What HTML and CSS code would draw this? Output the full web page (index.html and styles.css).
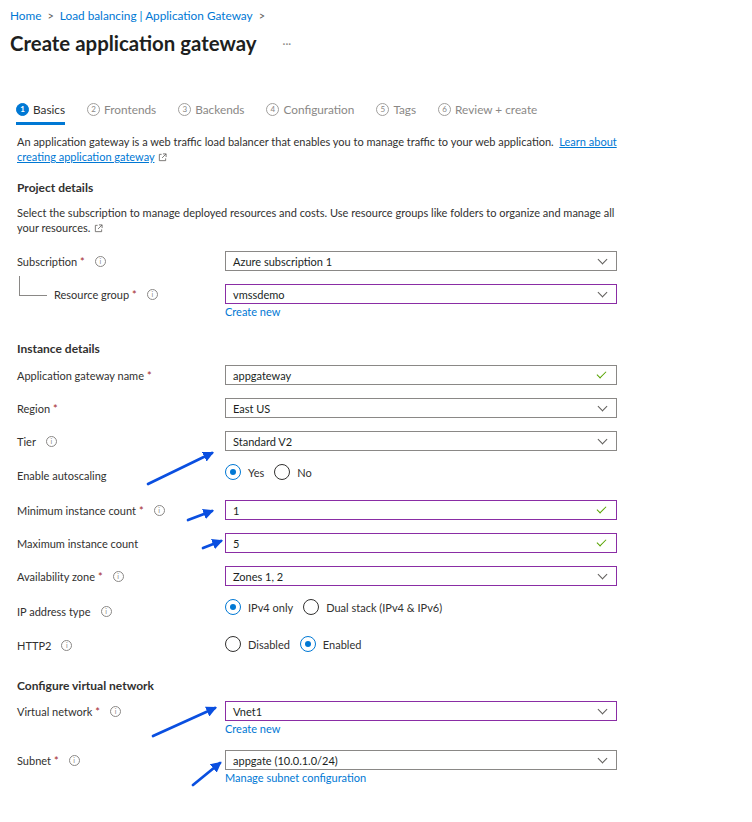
FILE: index.html
```html
<!DOCTYPE html>
<html>
<head>
<meta charset="utf-8">
<link rel="stylesheet" href="styles.css">
</head>
<body>
<div class="page">
  <nav class="crumbs">
    <a class="crumb">Home</a><span class="sep">&gt;</span><a class="crumb">Load balancing | Application Gateway</a><span class="sep">&gt;</span>
  </nav>
  <div class="titlebar">
    <h1 class="title">Create application gateway</h1>
    <span class="more">···</span>
  </div>

  <div class="content">
    <div class="tabs">
      <div class="tab active"><span class="num">1</span><span class="tabtext">Basics</span></div>
      <div class="tab"><span class="num">2</span><span class="tabtext">Frontends</span></div>
      <div class="tab"><span class="num">3</span><span class="tabtext">Backends</span></div>
      <div class="tab"><span class="num">4</span><span class="tabtext">Configuration</span></div>
      <div class="tab"><span class="num">5</span><span class="tabtext">Tags</span></div>
      <div class="tab"><span class="num">6</span><span class="tabtext">Review + create</span></div>
    </div>

    <p class="intro">An application gateway is a web traffic load balancer that enables you to manage traffic to your web application.&nbsp; <a class="link ul">Learn about</a><br><a class="link ul">creating application gateway</a> <svg class="ext" viewBox="0 0 10 10" width="9" height="9"><path d="M4 1.5H1.5v7h7V6" fill="none" stroke="#605e5c" stroke-width="0.9"/><path d="M5.5 1H9v3.5M9 1L4.5 5.5" fill="none" stroke="#605e5c" stroke-width="0.9"/></svg></p>

    <h2 class="section first">Project details</h2>
    <p class="desc">Select the subscription to manage deployed resources and costs. Use resource groups like folders to organize and manage all your resources. <svg class="ext" viewBox="0 0 10 10" width="9" height="9"><path d="M4 1.5H1.5v7h7V6" fill="none" stroke="#605e5c" stroke-width="0.9"/><path d="M5.5 1H9v3.5M9 1L4.5 5.5" fill="none" stroke="#605e5c" stroke-width="0.9"/></svg></p>

    <div class="row sub-row">
      <div class="label">Subscription <span class="req">*</span><span class="info">i</span></div>
      <div class="select"><span>Azure subscription 1</span><span class="chev"></span></div>
    </div>
    <div class="row rg-row">
      <div class="label indent"><span class="tree"></span>Resource group <span class="req">*</span><span class="info">i</span></div>
      <div class="select purple"><span>vmssdemo</span><span class="chev"></span></div>
    </div>
    <div class="under"><a class="link">Create new</a></div>

    <h2 class="section inst">Instance details</h2>
    <div class="row">
      <div class="label">Application gateway name <span class="req">*</span></div>
      <div class="select"><span>appgateway</span><span class="check"></span></div>
    </div>
    <div class="row">
      <div class="label">Region <span class="req">*</span></div>
      <div class="select"><span>East US</span><span class="chev"></span></div>
    </div>
    <div class="row">
      <div class="label">Tier<span class="info">i</span></div>
      <div class="select"><span>Standard V2</span><span class="chev"></span></div>
    </div>
    <div class="row radio-row autoscale">
      <div class="label low">Enable autoscaling</div>
      <div class="radios up">
        <span class="radio on"></span><span class="rlabel">Yes</span>
        <span class="radio"></span><span class="rlabel">No</span>
      </div>
    </div>
    <div class="row">
      <div class="label">Minimum instance count <span class="req">*</span><span class="info">i</span></div>
      <div class="select purple"><span>1</span><span class="check"></span></div>
    </div>
    <div class="row">
      <div class="label">Maximum instance count</div>
      <div class="select purple"><span>5</span><span class="check"></span></div>
    </div>
    <div class="row plus1">
      <div class="label">Availability zone <span class="req">*</span><span class="info">i</span></div>
      <div class="select purple"><span>Zones 1, 2</span><span class="chev"></span></div>
    </div>
    <div class="row radio-row plus1">
      <div class="label low">IP address type<span class="info">i</span></div>
      <div class="radios up2">
        <span class="radio on"></span><span class="rlabel">IPv4 only</span>
        <span class="radio"></span><span class="rlabel">Dual stack (IPv4 &amp; IPv6)</span>
      </div>
    </div>
    <div class="row radio-row">
      <div class="label low">HTTP2<span class="info">i</span></div>
      <div class="radios">
        <span class="radio"></span><span class="rlabel">Disabled</span>
        <span class="radio on"></span><span class="rlabel">Enabled</span>
      </div>
    </div>

    <h2 class="section vnet">Configure virtual network</h2>
    <div class="row tight">
      <div class="label">Virtual network <span class="req">*</span><span class="info">i</span></div>
      <div class="select purple"><span>Vnet1</span><span class="chev"></span></div>
    </div>
    <div class="under"><a class="link">Create new</a></div>
    <div class="row tight subnet">
      <div class="label">Subnet <span class="req">*</span><span class="info">i</span></div>
      <div class="select"><span>appgate (10.0.1.0/24)</span><span class="chev"></span></div>
    </div>
    <div class="under"><a class="link">Manage subnet configuration</a></div>
  </div>

  <svg class="annot" width="752" height="822" viewBox="0 0 752 822">
    <defs>
      <marker id="ah" markerWidth="4" markerHeight="4" refX="3.2" refY="2" orient="auto" markerUnits="strokeWidth">
        <path d="M0 0L4 2L0 4z" fill="#0a4fe0"/>
      </marker>
    </defs>
    <g stroke="#0a4fe0" stroke-width="2.7" fill="none" marker-end="url(#ah)" stroke-linecap="round">
      <line x1="148" y1="484" x2="212" y2="453"/>
      <line x1="188" y1="520" x2="212" y2="511"/>
      <line x1="203" y1="548" x2="221" y2="541"/>
      <line x1="153" y1="736" x2="215" y2="708"/>
      <line x1="193" y1="785" x2="220" y2="763"/>
    </g>
  </svg>
</div>
</body>
</html>
```

FILE: styles.css
```css
* { box-sizing: border-box; }
html, body { margin: 0; padding: 0; background: #fff; }
body {
  font-family: "Lato", "Noto Sans", sans-serif;
  font-size: 11px;
  color: #323130;
  width: 752px;
  height: 822px;
  overflow: hidden;
}
.page { position: relative; width: 752px; height: 822px; }
a { text-decoration: none; }
.crumbs {
  padding: 8px 0 0 10px;
  height: 24px;
  line-height: 16px;
  font-size: 11.8px;
  display: flex;
  align-items: center;
}
.crumb { color: #0078d4; }
.sep { color: #605e5c; margin: 0 6px; font-size: 11px; }
.titlebar {
  margin-top: 5px;
  padding-left: 10px;
  height: 28px;
  display: flex;
  align-items: center;
}
.title {
  margin: 0;
  font-size: 20.4px;
  font-weight: 700;
  line-height: 28px;
  color: #201f1e;
}
.more { margin-left: 26px; color: #8a8886; font-size: 11px; letter-spacing: 0; }

.content { padding-left: 17px; }
.tabs {
  margin-top: 42px;
  display: flex;
  gap: 22px;
  margin-left: -1px;
}
.tab {
  display: flex;
  align-items: center;
  height: 26px;
  padding-bottom: 3px;
  color: #8a8886;
  font-size: 11.8px;
  border-bottom: 3px solid transparent;
}
.tab.active { color: #323130; border-bottom-color: #0078d4; }
.num {
  width: 13px; height: 13px;
  border-radius: 50%;
  border: 1px solid #a19f9d;
  font-size: 8px;
  line-height: 11px;
  text-align: center;
  margin-right: 4px;
  color: #8a8886;
}
.tab.active .num { background: #0078d4; border-color: #0078d4; color: #fff; font-weight: 700; }

.intro, .desc {
  margin: 0;
  line-height: 15px;
  width: 610px;
}
.intro { margin-top: 9px; }
.link { color: #0078d4; }
.link.ul { text-decoration: underline; }
.ext { vertical-align: -1px; margin-left: 1px; }
.section {
  margin: 0;
  font-size: 12px;
  font-weight: 700;
  line-height: 18px;
  color: #323130;
}
.section.first { margin-top: 15px; }
.desc { margin-top: 8px; }
.section.inst { margin-top: 21px; margin-bottom: 7px; }
.section.vnet { margin-top: 23px; margin-bottom: 6px; }

.row {
  display: grid;
  grid-template-columns: 208px 392px;
  align-items: center;
  height: 20px;
  margin-bottom: 13px;
}
.row.autoscale { margin-bottom: 16px; }
.row.plus1 { margin-bottom: 14px; }
.sub-row { margin-top: 16px; }
.rg-row { margin-bottom: 0; }
.row.tight { margin-bottom: 0; }
.row.subnet { margin-top: 14px; }
.label { display: flex; align-items: center; white-space: nowrap; position: relative; }
.label.low { padding-top: 3px; }
.label.indent { padding-left: 37px; }
.tree {
  position: absolute;
  left: 2px; top: -12px;
  width: 28px; height: 20px;
  border-left: 1px solid #8a8886;
  border-bottom: 1px solid #8a8886;
}
.req { color: #a4262c; margin-left: 3px; }
.info {
  display: inline-block;
  width: 11px; height: 11px;
  border: 1px solid #8a8886;
  border-radius: 50%;
  color: #8a8886;
  font-size: 7px;
  line-height: 9px;
  text-align: center;
  margin-left: 10px;
}
.select {
  height: 20px;
  border: 1px solid #8a8886;
  display: flex;
  align-items: center;
  justify-content: space-between;
  padding: 0 8px 0 7px;
  color: #201f1e;
}
.select.purple { border-color: #8a2da5; }
.chev {
  width: 7px; height: 7px;
  border-right: 1px solid #605e5c;
  border-bottom: 1px solid #605e5c;
  transform: rotate(45deg);
  margin-top: -4px;
  margin-right: 2px;
}
.check {
  width: 5px; height: 9px;
  border-right: 1px solid #57a300;
  border-bottom: 1px solid #57a300;
  transform: rotate(45deg);
  margin-top: -3px;
  margin-right: 4px;
}
.under { line-height: 15px; padding-left: 208px; margin-bottom: 0; }
.radios { display: flex; align-items: center; }
.radios.up { margin-top: -4px; }
.radios.up2 { margin-top: -6px; }
.radio {
  width: 16px; height: 16px;
  border: 1px solid #323130;
  border-radius: 50%;
  position: relative;
  flex: none;
}
.radio.on { border-color: #0078d4; }
.radio.on::after {
  content: "";
  position: absolute;
  left: 4px; top: 4px;
  width: 6px; height: 6px;
  border-radius: 50%;
  background: #0078d4;
}
.rlabel { margin-left: 7px; margin-right: 10px; color: #323130; }
.annot { position: absolute; left: 0; top: 0; pointer-events: none; }
```
